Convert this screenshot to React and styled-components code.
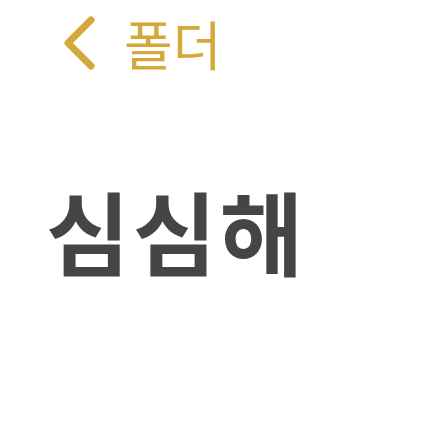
import React from 'react';
import styled, { createGlobalStyle } from 'styled-components';

const GlobalStyle = createGlobalStyle`
  html, body {
    margin: 0;
    padding: 0;
    background: #ffffff;
  }
  body {
    font-family: "Noto Sans CJK KR", "Noto Sans", sans-serif;
  }
`;

const Page = styled.div`
  display: flex;
  flex-direction: column;
  width: 439px;
  height: 439px;
  background: #ffffff;
`;

const NavBar = styled.header`
  display: flex;
  align-items: center;
  padding: 15px 0 0 63px;
`;

const BackButton = styled.button`
  display: flex;
  align-items: center;
  gap: 27px;
  padding: 0;
  border: none;
  background: none;
  color: #d4a83a;
  font-family: inherit;
  font-size: 53px;
  font-weight: 400;
  line-height: 1;
  letter-spacing: 0;
  cursor: pointer;
`;

const Chevron = styled.svg`
  width: 34px;
  height: 56px;
  flex-shrink: 0;
`;

const Title = styled.h1`
  margin: 113px 0 0 46px;
  color: #454545;
  font-size: 91px;
  font-weight: 700;
  line-height: 1;
  letter-spacing: 3px;
`;

const BackChevron = () => (
  <Chevron viewBox="0 0 34 56" fill="none">
    <path
      d="M28 5 L5 28 L28 51"
      stroke="currentColor"
      strokeWidth="7"
      strokeLinecap="round"
      strokeLinejoin="round"
    />
  </Chevron>
);

const App = () => {
  return (
    <>
      <GlobalStyle />
      <Page>
        <NavBar>
          <BackButton>
            <BackChevron />
            폴더
          </BackButton>
        </NavBar>
        <Title>심심해</Title>
      </Page>
    </>
  );
};

export default App;
